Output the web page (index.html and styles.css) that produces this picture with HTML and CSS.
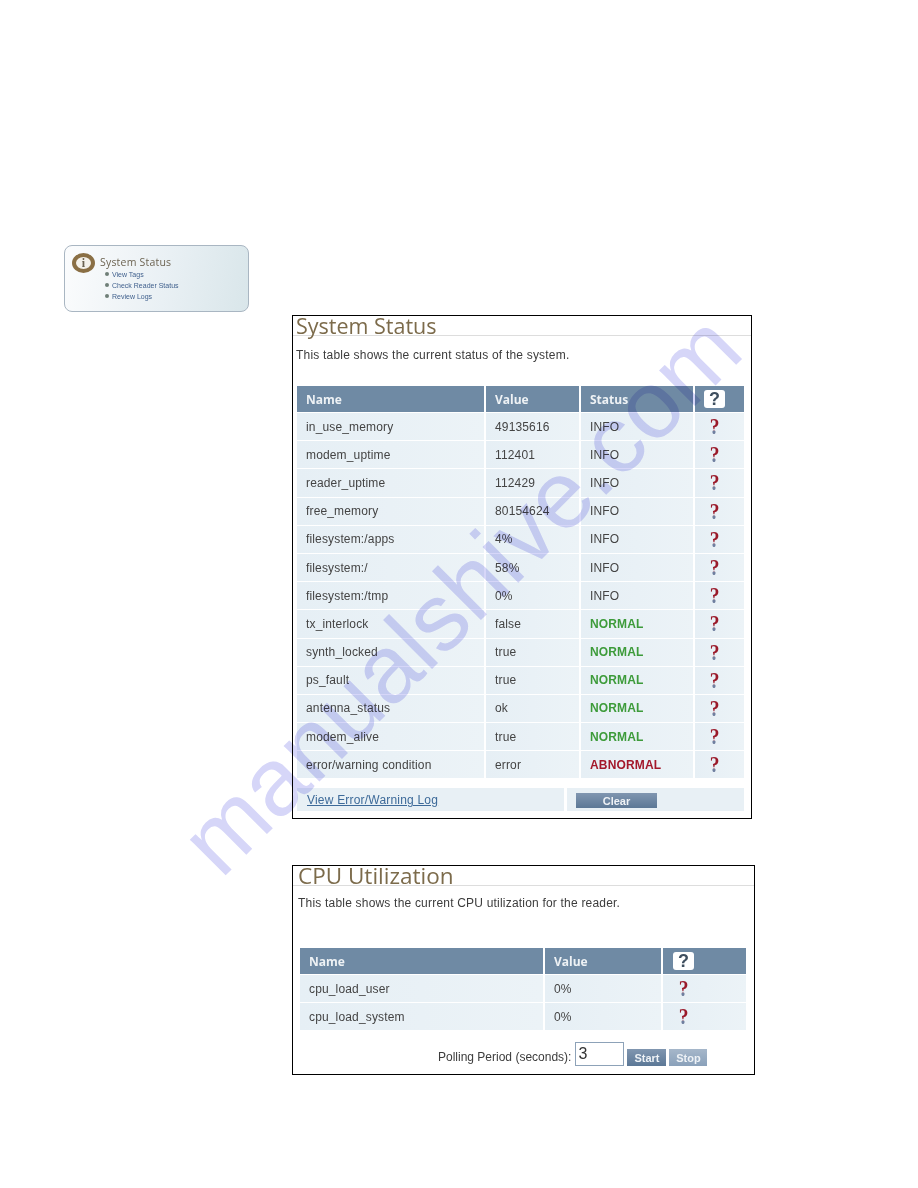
FILE: index.html
```html
<!DOCTYPE html>
<html lang="en">
<head>
  <meta charset="UTF-8" />
  <title>System Status</title>
  <link rel="stylesheet" href="styles.css">
</head>
<body>

  <div class="nav-card">
    <div class="nav-head">
      <span class="nav-icon"><span class="nav-icon-i">i</span></span>
      <span class="nav-title">System Status</span>
    </div>
    <ul class="nav-links">
      <li>View Tags</li>
      <li>Check Reader Status</li>
      <li>Review Logs</li>
    </ul>
  </div>

  <!-- System status table -->
  <div class="panel panel-status">
    <h2>System Status</h2>
    <p>This table shows the current status of the system.</p>

    <div class="grid">
      <div class="th">Name</div><div class="th">Value</div><div class="th">Status</div><div class="th th-help"><span class="help-box">?</span></div>

      <div class="td">in_use_memory</div><div class="td">49135616</div><div class="td">INFO</div><div class="td td-help"><span class="help">?</span></div>
      <div class="td">modem_uptime</div><div class="td">112401</div><div class="td">INFO</div><div class="td td-help"><span class="help">?</span></div>
      <div class="td">reader_uptime</div><div class="td">112429</div><div class="td">INFO</div><div class="td td-help"><span class="help">?</span></div>
      <div class="td">free_memory</div><div class="td">80154624</div><div class="td">INFO</div><div class="td td-help"><span class="help">?</span></div>
      <div class="td">filesystem:/apps</div><div class="td">4%</div><div class="td">INFO</div><div class="td td-help"><span class="help">?</span></div>
      <div class="td">filesystem:/</div><div class="td">58%</div><div class="td">INFO</div><div class="td td-help"><span class="help">?</span></div>
      <div class="td">filesystem:/tmp</div><div class="td">0%</div><div class="td">INFO</div><div class="td td-help"><span class="help">?</span></div>
      <div class="td">tx_interlock</div><div class="td">false</div><div class="td normal">NORMAL</div><div class="td td-help"><span class="help">?</span></div>
      <div class="td">synth_locked</div><div class="td">true</div><div class="td normal">NORMAL</div><div class="td td-help"><span class="help">?</span></div>
      <div class="td">ps_fault</div><div class="td">true</div><div class="td normal">NORMAL</div><div class="td td-help"><span class="help">?</span></div>
      <div class="td">antenna_status</div><div class="td">ok</div><div class="td normal">NORMAL</div><div class="td td-help"><span class="help">?</span></div>
      <div class="td">modem_alive</div><div class="td">true</div><div class="td normal">NORMAL</div><div class="td td-help"><span class="help">?</span></div>
      <div class="td">error/warning condition</div><div class="td">error</div><div class="td abnormal">ABNORMAL</div><div class="td td-help"><span class="help">?</span></div>
    </div>

    <div class="log-row">
      <div class="log-link"><a href="#">View Error/Warning Log</a></div>
      <div class="log-action"><button class="btn btn-clear">Clear</button></div>
    </div>
  </div>

  <!-- CPU table -->
  <div class="panel panel-cpu">
    <h2>CPU Utilization</h2>
    <p>This table shows the current CPU utilization for the reader.</p>

    <div class="grid">
      <div class="th">Name</div><div class="th">Value</div><div class="th th-help"><span class="help-box">?</span></div>

      <div class="td">cpu_load_user</div><div class="td">0%</div><div class="td td-help"><span class="help">?</span></div>
      <div class="td">cpu_load_system</div><div class="td">0%</div><div class="td td-help"><span class="help">?</span></div>
    </div>

    <div class="polling">
      <label for="period">Polling Period (seconds):</label>
      <input type="text" id="period" value="3" />
      <button class="btn btn-start">Start</button>
      <button class="btn btn-stop">Stop</button>
    </div>
  </div>

  <div class="watermark">manualshive.com</div>

</body>
</html>
```

FILE: styles.css
```css
body {
  margin: 0;
  padding: 245px 0 0 64px;
  background: #fff;
  font-family: "Liberation Sans", Arial, sans-serif;
  font-size: 12px;
  color: #444;
}

/* nav card */
.nav-card {
  box-sizing: border-box;
  width: 185px;
  height: 67px;
  padding: 7px 0 0 7px;
  border: 1px solid #a9b6c2;
  border-radius: 8px;
  background: linear-gradient(100deg, #fbfcfd, #e9f0f4 55%, #d9e6ea);
}
.nav-head {
  display: flex;
  align-items: center;
  gap: 5px;
}
.nav-icon {
  box-sizing: border-box;
  display: flex;
  justify-content: center;
  align-items: center;
  width: 23px;
  height: 20px;
  border: 4px solid #8a6f45;
  border-radius: 50%;
  background: #f4f1ea;
}
.nav-icon-i {
  font-family: "Liberation Serif", serif;
  font-weight: bold;
  font-size: 12px;
  line-height: 1;
  color: #6b6250;
}
.nav-title {
  margin-top: -2px;
  font-family: "Open Sans", sans-serif;
  font-size: 10.5px;
  letter-spacing: 0.2px;
  color: #6d6452;
}
.nav-links {
  list-style: none;
  margin: -4px 0 0 33px;
  padding: 0;
  font-size: 7px;
  line-height: 11px;
  color: #3f5f8c;
}
.nav-links li {
  position: relative;
  padding-left: 7px;
}
.nav-links li::before {
  content: "";
  position: absolute;
  left: 0;
  top: 3px;
  width: 4px;
  height: 4px;
  border-radius: 50%;
  background: #6f7f78;
}

/* panels */
.panel {
  border: 1px solid #000;
  margin-left: 228px;
  box-sizing: border-box;
}
.panel h2 {
  margin: 0;
  height: 19px;
  line-height: 19px;
  border-bottom: 1px solid #ddd;
  font-family: "Open Sans", sans-serif;
  font-weight: normal;
  color: #7c6b4b;
  box-sizing: content-box;
}
.panel p {
  margin: 0;
  line-height: 14px;
  font-size: 12px;
  letter-spacing: 0.2px;
  color: #3c3c3c;
}
.grid {
  display: grid;
  column-gap: 2px;
  row-gap: 1px;
  grid-template-rows: 26px;
  grid-auto-rows: 27.2px;
}
.th, .td {
  display: flex;
  align-items: center;
  padding-left: 9px;
}
.th {
  background: #6f8aa4;
  font-family: "Open Sans", sans-serif;
  font-weight: bold;
  font-size: 12px;
  color: #eef2f5;
}
.td {
  background: linear-gradient(90deg, #e6eff5, #ecf3f7);
  letter-spacing: 0.15px;
}
.normal {
  font-weight: bold;
  color: #3d9b3a;
}
.abnormal {
  font-weight: bold;
  color: #a3182b;
}
.help-box {
  width: 21px;
  height: 18px;
  border-radius: 3px;
  background: #fff;
  text-align: center;
  font-family: "Liberation Sans", sans-serif;
  font-weight: bold;
  font-size: 18px;
  line-height: 18px;
  color: #3f4f5f;
}
.help {
  display: inline-block;
  transform: scaleX(0.85);
  font-family: "Liberation Serif", serif;
  font-weight: bold;
  font-size: 23px;
  line-height: 23px;
  background: linear-gradient(#9a1a2a 64%, #6f7f9f 70%);
  -webkit-background-clip: text;
  background-clip: text;
  color: transparent;
}

/* first panel */
.panel-status {
  width: 460px;
  height: 504px;
  margin-top: 3px;
}
.panel-status h2 {
  font-size: 21.5px;
}
.panel-status h2, .panel-status p {
  padding-left: 3px;
}
.panel-status p {
  margin-top: 12px;
}
.panel-status .grid {
  margin: 24px 0 0 4px;
  grid-template-columns: 187px 93px 112px 49px;
}
.panel-status .td-help {
  padding-left: 14px;
}
.log-row {
  display: flex;
  gap: 3px;
  height: 23px;
  margin: 10px 0 0 4px;
}
.log-link {
  width: 267px;
  padding-left: 10px;
  box-sizing: border-box;
  line-height: 25px;
  background: #e8f0f5;
}
.log-link a {
  color: #3d6a99;
  letter-spacing: 0.2px;
}
.log-action {
  width: 177px;
  padding: 5px 0 0 9px;
  box-sizing: border-box;
  background: #e8f0f5;
}

/* buttons */
.btn {
  display: block;
  margin: 0;
  padding: 0;
  border: 0;
  height: 16px;
  background: linear-gradient(#8096b0, #5c7896);
  font-family: "Liberation Sans", sans-serif;
  font-weight: bold;
  font-size: 11px;
  color: #eef2f6;
}
.btn-clear {
  width: 81px;
  height: 15px;
}
.btn-start {
  width: 39px;
  height: 17px;
}
.btn-stop {
  width: 38px;
  height: 17px;
  background: linear-gradient(#a6b7ca, #8aa1ba);
}

/* second panel */
.panel-cpu {
  width: 463px;
  height: 210px;
  margin-top: 46px;
}
.panel-cpu h2 {
  font-size: 22.5px;
}
.panel-cpu h2, .panel-cpu p {
  padding-left: 5px;
}
.panel-cpu p {
  margin-top: 10px;
}
.panel-cpu .grid {
  margin: 38px 0 0 7px;
  grid-template-columns: 243px 116px 83px;
}
.panel-cpu .td-help {
  padding-left: 15px;
}
.panel-cpu .th-help {
  padding-left: 10px;
}
.polling {
  display: flex;
  align-items: flex-end;
  gap: 3px;
  margin: 12px 0 0 145px;
}
.polling label {
  margin-bottom: 2px;
  color: #3c3c3c;
}
.polling input {
  box-sizing: border-box;
  width: 49px;
  height: 24px;
  margin: 0 0 0 1px;
  padding: 0 2px;
  border: 1px solid #8da2b8;
  font-family: "Liberation Sans", sans-serif;
  font-size: 16px;
  color: #333;
}

/* page watermark */
.watermark {
  position: absolute;
  left: 221px;
  top: 800px;
  transform-origin: 0 80px;
  transform: rotate(-45deg);
  font-size: 95.5px;
  line-height: 1;
  white-space: nowrap;
  color: #d6d6f8;
  mix-blend-mode: multiply;
  pointer-events: none;
}
```
